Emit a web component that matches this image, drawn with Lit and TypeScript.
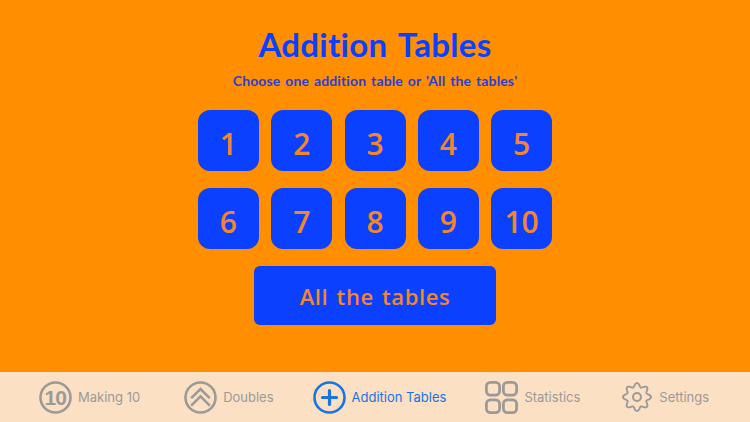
import { LitElement, html, css } from "lit";
import { customElement } from "lit/decorators.js";

const gearPath = (() => {
  const pts: string[] = [];
  for (let i = 0; i < 160; i++) {
    const a = (i / 160) * Math.PI * 2;
    const r = 12.1 + 1.9 * Math.cos(8 * a);
    pts.push(`${(15 + r * Math.sin(a)).toFixed(2)} ${(15 - r * Math.cos(a)).toFixed(2)}`);
  }
  return `M${pts.join("L")}Z`;
})();

const icons = {
  ten: html`<svg class="ico" viewBox="0 0 33 33" fill="none" stroke="currentColor"><circle cx="16.5" cy="16.5" r="15" stroke-width="2.6"/><text x="16.3" y="23.6" text-anchor="middle" fill="currentColor" stroke="none" font-family="'Liberation Sans',sans-serif" font-weight="700" font-size="21" letter-spacing="-.8">10</text></svg>`,
  dbl: html`<svg class="ico" viewBox="0 0 33 33" fill="none" stroke="currentColor" stroke-width="2.6"><circle cx="16.5" cy="16.5" r="15"/><path d="M7.2 17.2 16.5 8l9.3 9.2M7.2 24.6l9.3-9.2 9.3 9.2"/></svg>`,
  plus: html`<svg class="ico" viewBox="0 0 33 33" fill="none" stroke="currentColor"><circle cx="16.5" cy="16.5" r="15" stroke-width="2.6"/><path d="M16.5 9.5v14M9.5 16.5h14" stroke-width="3.2" stroke-linecap="round"/></svg>`,
  grid: html`<svg class="ico" viewBox="0 0 33 33" fill="none" stroke="currentColor" stroke-width="2.8"><rect x="1.4" y="1.4" width="13.2" height="12.7" rx="4"/><rect x="18.4" y="1.4" width="13.2" height="12.7" rx="4"/><rect x="1.4" y="18.9" width="13.2" height="12.7" rx="4"/><rect x="18.4" y="18.9" width="13.2" height="12.7" rx="4"/></svg>`,
  gear: html`<svg class="ico gear" viewBox="0 0 30 30" fill="none" stroke="currentColor"><path d=${gearPath} stroke-width="1.9"/><circle cx="15" cy="15" r="4" stroke-width="2"/></svg>`,
};

@customElement("app-root")
export class AppRoot extends LitElement {
  static styles = css`
    :host { display: flex; flex-direction: column; width: 750px; height: 422px; background: #ff8f00; overflow: hidden; }
    main { flex: 0 0 372px; height: 372px; display: flex; flex-direction: column; align-items: center; font-family: "Lato", sans-serif; box-sizing: border-box; padding-top: 23px; }
    h1 { margin: 0; font-size: 33px; line-height: 42px; font-weight: 700; color: #0b40ff; letter-spacing: .3px; word-spacing: 3px; }
    p { margin: 5px 0 0; font-size: 14px; line-height: 22px; font-weight: 700; color: #2a3fd6; letter-spacing: .12px; word-spacing: 1.4px; }
    .grid { display: grid; grid-template-columns: repeat(5, 61px); gap: 17px 12.3px; margin-top: 18px; }
    .n { height: 61px; border-radius: 12px; background: #0b40ff; color: #f4862a; display: flex; align-items: center; justify-content: center; font-family: "Open Sans", sans-serif; font-size: 30px; font-weight: 600; padding-top: 5px; box-sizing: border-box; }
    .all { width: 242px; height: 59px; margin-top: 17px; border-radius: 6px; background: #0b40ff; color: #f4862a; display: flex; align-items: center; justify-content: center; font-family: "Open Sans", sans-serif; font-size: 22px; letter-spacing: .6px; word-spacing: 2px; font-weight: 600; }
    nav { flex: 1; background: #fbe0c4; display: flex; align-items: center; justify-content: flex-start; font-family: "Inter", sans-serif; font-size: 13px; color: #9c9a98; padding-left: 39px; }
    .tab { display: flex; align-items: center; gap: 6px; }
    .tab:nth-child(2) { margin-left: 44px; }
    .tab:nth-child(3) { margin-left: 39px; }
    .tab:nth-child(4) { margin-left: 39px; }
    .tab:nth-child(5) { margin-left: 42px; }
    .tab.on { color: #1a74e0; }
    .ico { width: 33px; height: 33px; flex: none; display: block; }
    .ico.gear { width: 30px; height: 30px; margin-right: 1px; }
  `;

  render() {
    const nums = [1, 2, 3, 4, 5, 6, 7, 8, 9, 10];
    const tabs = [
      [icons.ten, "Making 10", false],
      [icons.dbl, "Doubles", false],
      [icons.plus, "Addition Tables", true],
      [icons.grid, "Statistics", false],
      [icons.gear, "Settings", false],
    ] as const;
    return html`
      <main>
        <h1>Addition Tables</h1>
        <p>Choose one addition table or 'All the tables'</p>
        <div class="grid">${nums.map((n) => html`<div class="n">${n}</div>`)}</div>
        <div class="all">All the tables</div>
      </main>
      <nav>
        ${tabs.map(([i, t, on]) => html`<div class="tab ${on ? "on" : ""}">${i}<span>${t}</span></div>`)}
      </nav>
    `;
  }
}
